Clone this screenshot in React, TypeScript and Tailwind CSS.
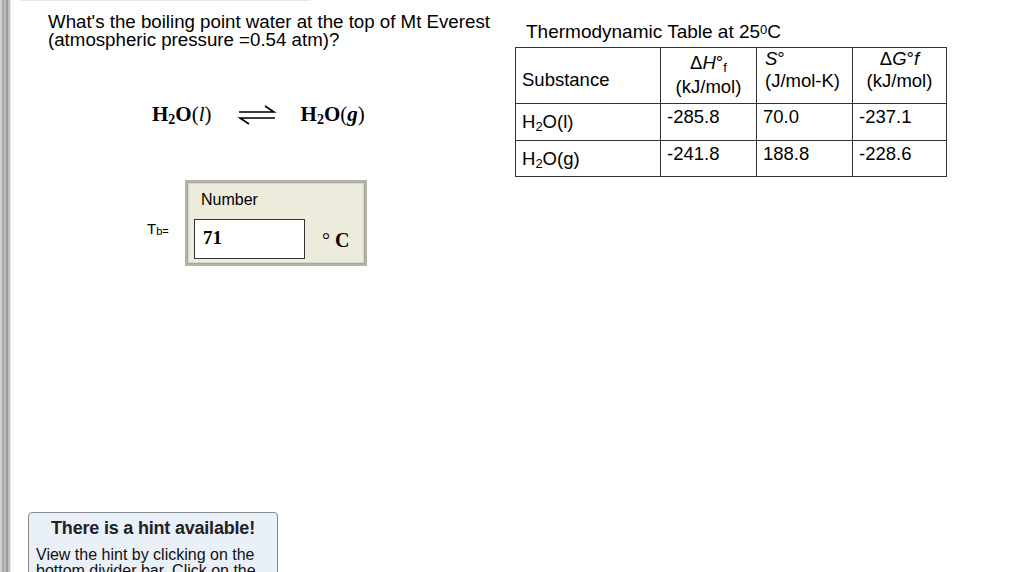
import React from 'react';

const arial = { fontFamily: '"Liberation Sans", Arial, sans-serif' };
const times = { fontFamily: '"Liberation Serif", "Times New Roman", serif' };

function LeftRail() {
  return (
    <div className="flex h-full shrink-0">
      <div className="w-[2px] bg-[#d4d4d4]" />
      <div className="w-[2px] bg-[#a8a8a8]" />
      <div className="w-[2px] bg-[#bdbdbd]" />
      <div className="w-[2px] bg-[#9a9a9a]" />
      <div className="w-[2px] bg-[#c6c0b4]" />
      <div className="w-[1px] bg-[#ebebeb]" />
    </div>
  );
}

function Equation() {
  return (
    <div className="flex items-center text-[21px] font-bold text-black" style={times}>
      <span>
        H<sub className="text-[14px] relative top-[3px]">2</sub>O<span className="font-normal">(</span>
        <i className="font-normal">l</i>
        <span className="font-normal">)</span>
      </span>
      <svg width="40" height="22" viewBox="0 0 40 22" className="ml-[25px] mr-[24px]">
        <path d="M2 8 H37 L28 2" fill="none" stroke="#000" strokeWidth="1.6" />
        <path d="M38 14 H3 L12 20" fill="none" stroke="#000" strokeWidth="1.6" />
      </svg>
      <span>
        H<sub className="text-[14px] relative top-[3px]">2</sub>O<span className="font-normal">(</span>
        <i>g</i>
        <span className="font-normal">)</span>
      </span>
    </div>
  );
}

function NumberBox() {
  return (
    <div className="flex items-center">
      <div className="w-[39px] pl-[1px] pt-[14px] text-[15px] text-black" style={arial}>
        T<sub className="text-[11px] relative top-[1px]">b=</sub>
      </div>
      <div className="border-[2px] border-[#b4b4aa] bg-[#a7a79c] p-[1px]">
        <div className="w-[176px] border border-[#d8d8cc] bg-[#ecebdc] pl-[5px] pt-[7px] pb-[3px]">
          <div className="pl-[7px] text-[16px] text-black leading-[18px]" style={arial}>Number</div>
          <div className="mt-[10px] flex items-center">
            <div className="flex h-[40px] w-[111px] items-center border border-[#333] bg-white pl-[8px]">
              <span className="text-[19px] font-bold" style={times}>71</span>
            </div>
            <span className="ml-[17px] pt-[2px] text-[20px]" style={times}>
              °&nbsp;<b>C</b>
            </span>
          </div>
        </div>
      </div>
    </div>
  );
}

function ThermoTable() {
  const cell = 'border border-[#333] px-[6px]';
  return (
    <div className="text-[18.5px] text-black" style={arial}>
      <div className="ml-[11px] text-[19px] leading-[18px]">
        Thermodynamic Table at 25<sup className="text-[13px] relative top-[-4px]">0</sup>C
      </div>
      <table className="mt-[6px] border-collapse leading-[20px]">
        <tbody>
          <tr className="h-[56px]">
            <td className={`${cell} w-[145px] align-middle pt-[8px]`}>Substance</td>
            <td className={`${cell} w-[96px] align-top text-center leading-[24px] pt-[3px]`}>
              Δ<i>H</i>°<sub className="text-[13px]">f</sub>
              <br />
              (kJ/mol)
            </td>
            <td className={`${cell} w-[96px] align-top leading-[22px] pt-[0px] px-[8px]`}>
              <i>S</i>°
              <br />
              (J/mol-K)
            </td>
            <td className={`${cell} w-[94px] align-top text-center leading-[22px] pt-[0px]`}>
              Δ<i>G</i>°<i>f</i>
              <br />
              (kJ/mol)
            </td>
          </tr>
          <tr className="h-[37px]">
            <td className={`${cell} align-middle pt-[0px]`}>
              H<sub className="text-[13px]">2</sub>O(l)
            </td>
            <td className={`${cell} align-top pt-[3px]`}>-285.8</td>
            <td className={`${cell} align-top pt-[3px]`}>70.0</td>
            <td className={`${cell} align-top pt-[3px]`}>-237.1</td>
          </tr>
          <tr className="h-[36px]">
            <td className={`${cell} align-middle pt-[0px]`}>
              H<sub className="text-[13px]">2</sub>O(g)
            </td>
            <td className={`${cell} align-top pt-[3px]`}>-241.8</td>
            <td className={`${cell} align-top pt-[3px]`}>188.8</td>
            <td className={`${cell} align-top pt-[3px]`}>-228.6</td>
          </tr>
        </tbody>
      </table>
    </div>
  );
}

function HintBox() {
  return (
    <div className="ml-[17px] -mb-[20px] h-[80px] w-[250px] overflow-hidden rounded-[4px] border border-[#8a8a8a] bg-[#e9f0f7] px-[7px] pt-[4px] text-[16px] text-[#111]" style={arial}>
      <div className="text-center text-[18px] font-bold leading-[22px] tracking-[-0.2px] text-[#222]">There is a hint available!</div>
      <div className="mt-[8px] leading-[16px]">
        View the hint by clicking on the
        <br />
        bottom divider bar. Click on the
      </div>
    </div>
  );
}

export default function App() {
  return (
    <div className="flex h-[572px] w-[1024px] overflow-hidden bg-white">
      <LeftRail />
      <div className="relative flex flex-1 flex-col">
        <div className="ml-[9px] h-[1px] w-[290px] bg-[#e8e8e8]" />
        <div className="flex flex-1">
          <div className="flex w-[500px] flex-col">
            <div className="ml-[37px] mt-[12px] text-[18.7px] leading-[18px] text-black" style={arial}>
              What's the boiling point water at the top of Mt Everest
              <br />
              (atmospheric pressure =0.54 atm)?
            </div>
            <div className="ml-[141px] mt-[50px]">
              <Equation />
            </div>
            <div className="ml-[135px] mt-[49px]">
              <NumberBox />
            </div>
            <div className="mt-auto">
              <HintBox />
            </div>
          </div>
          <div className="ml-[4px] mt-[22px]">
            <ThermoTable />
          </div>
        </div>
      </div>
    </div>
  );
}
